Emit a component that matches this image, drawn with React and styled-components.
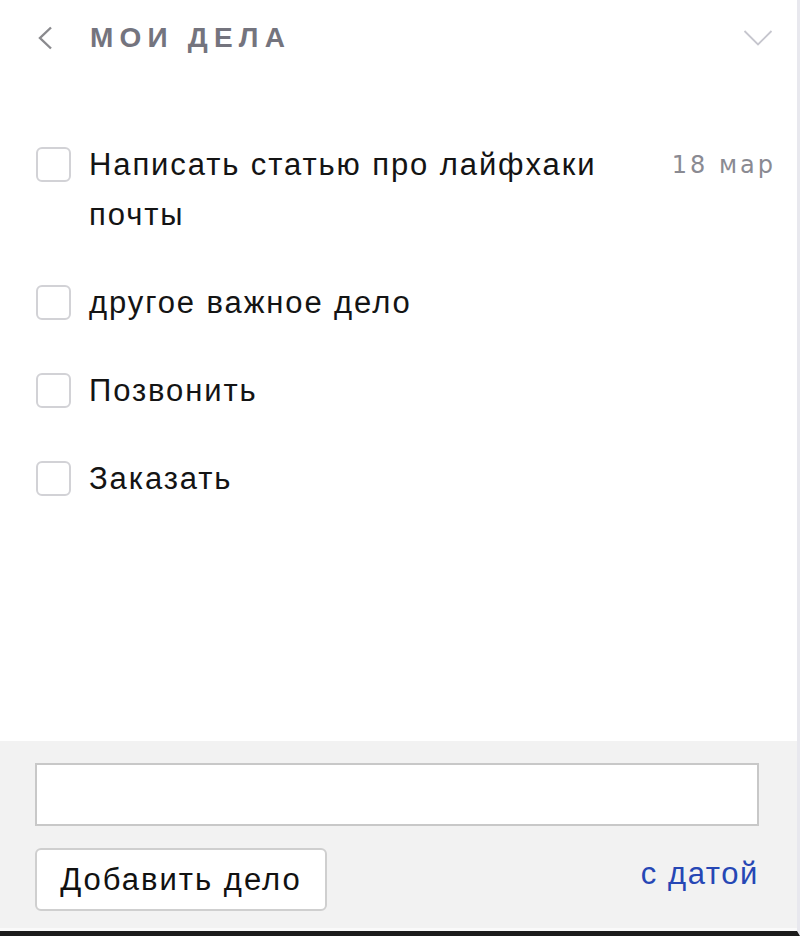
import React from 'react';
import styled, { createGlobalStyle } from 'styled-components';

const GlobalStyle = createGlobalStyle`
  html, body {
    margin: 0;
    padding: 0;
    background: #ffffff;
  }
  * {
    box-sizing: border-box;
  }
`;

const Frame = styled.div`
  width: 800px;
  height: 936px;
  display: flex;
  flex-direction: column;
  background: #ffffff;
  border-right: 3px solid #e8e8ee;
  border-bottom: 5px solid #1c1c1c;
  font-family: "Liberation Sans", Arial, sans-serif;
  color: #161616;
  overflow: hidden;
`;

const Header = styled.div`
  height: 76px;
  display: flex;
  align-items: center;
  padding: 0 24px 0 37px;
`;

const IconButton = styled.button`
  display: flex;
  align-items: center;
  justify-content: center;
  background: none;
  border: 0;
  padding: 0;
  cursor: pointer;
`;

const Title = styled.h1`
  flex: 1;
  margin: 0 0 0 37px;
  font-size: 28px;
  font-weight: 700;
  letter-spacing: 6.2px;
  text-transform: uppercase;
  color: #74747e;
`;

const TaskList = styled.ul`
  flex: 1;
  list-style: none;
  margin: 0;
  padding: 64px 21px 0 36px;
  display: flex;
  flex-direction: column;
  gap: 38px;
`;

const TaskRow = styled.li`
  display: grid;
  grid-template-columns: 35px 1fr auto;
  column-gap: 18px;
  align-items: start;
`;

const CheckBox = styled.span`
  width: 35px;
  height: 35px;
  margin-top: 7px;
  border: 2px solid #d2d2d6;
  border-radius: 6px;
  background: #ffffff;
`;

const TaskText = styled.span`
  font-size: 31px;
  line-height: 50px;
  letter-spacing: 1.9px;
  color: #141414;
`;

const TaskDate = styled.span`
  padding-left: 33px;
  font-family: "DejaVu Sans", Verdana, sans-serif;
  font-size: 24px;
  line-height: 50px;
  letter-spacing: 3px;
  color: #8a8a92;
  white-space: nowrap;
`;

const Footer = styled.div`
  height: 190px;
  background: #f2f2f2;
  padding: 22px 38px 0 35px;
  display: flex;
  flex-direction: column;
  gap: 22px;
  border-bottom: 3px solid #fafafa;
`;

const Field = styled.input`
  height: 63px;
  width: 100%;
  border: 2px solid #c8c8c8;
  background: #ffffff;
  font-family: inherit;
  font-size: 31px;
  padding: 0 12px;
  outline: none;
`;

const ActionRow = styled.div`
  display: flex;
  align-items: center;
  justify-content: space-between;
`;

const AddButton = styled.button`
  width: 292px;
  height: 63px;
  background: #ffffff;
  border: 2px solid #cfcfcf;
  border-radius: 6px;
  font-family: "Liberation Sans", Arial, sans-serif;
  font-size: 31px;
  letter-spacing: 2px;
  color: #111111;
  padding: 0;
  cursor: pointer;
`;

const DateLink = styled.a`
  padding-bottom: 12px;
  font-size: 31px;
  letter-spacing: 1.6px;
  color: #2647b5;
  text-decoration: none;
  cursor: pointer;
`;

const tasks = [
  { id: 1, text: 'Написать статью про лайфхаки почты', date: '18 мар' },
  { id: 2, text: 'другое важное дело' },
  { id: 3, text: 'Позвонить' },
  { id: 4, text: 'Заказать' },
];

const App = () => (
  <>
    <GlobalStyle />
    <Frame>
      <Header>
        <IconButton aria-label="Назад">
          <svg width="16" height="24" viewBox="0 0 16 24" fill="none">
            <path d="M14 1.5L3 12l11 10.5" stroke="#8a8a8e" strokeWidth="2.4" />
          </svg>
        </IconButton>
        <Title>Мои дела</Title>
        <IconButton aria-label="Свернуть">
          <svg width="30" height="18" viewBox="0 0 30 18" fill="none">
            <path d="M1.5 2l13.5 13.5L28.5 2" stroke="#c6c6ce" strokeWidth="1.8" />
          </svg>
        </IconButton>
      </Header>
      <TaskList>
        {tasks.map((task) => (
          <TaskRow key={task.id}>
            <CheckBox />
            <TaskText>{task.text}</TaskText>
            {task.date ? <TaskDate>{task.date}</TaskDate> : <span />}
          </TaskRow>
        ))}
      </TaskList>
      <Footer>
        <Field type="text" />
        <ActionRow>
          <AddButton>Добавить дело</AddButton>
          <DateLink>с датой</DateLink>
        </ActionRow>
      </Footer>
    </Frame>
  </>
);

export default App;
